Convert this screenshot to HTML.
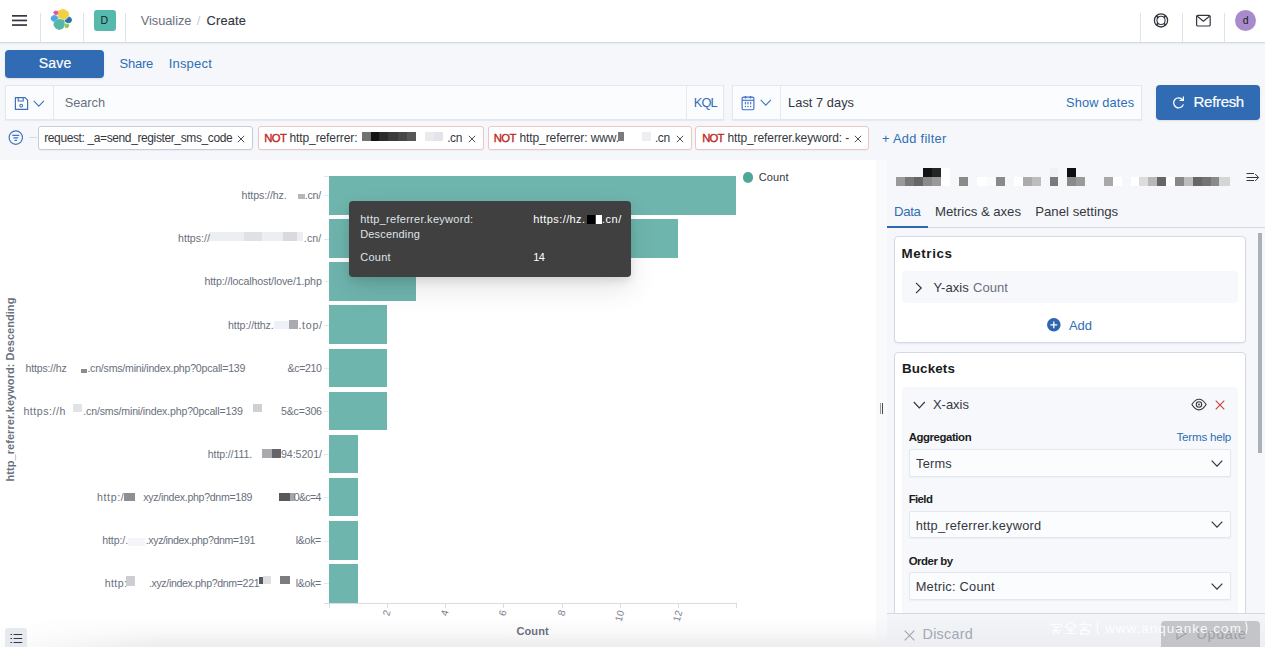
<!DOCTYPE html>
<html><head><meta charset="utf-8">
<style>
*{box-sizing:border-box;margin:0;padding:0}
html,body{width:1265px;height:647px;overflow:hidden;background:#fff;font-family:"Liberation Sans",sans-serif}
.b{position:absolute}
.tx{position:absolute;white-space:nowrap;line-height:1;font-family:"Liberation Sans",sans-serif}
</style></head><body>
<div class="b" style="left:0px;top:0px;width:1265px;height:42px;background:#fff"></div>
<div class="b" style="left:0px;top:42px;width:1265px;height:1px;background:#d3dae6"></div>
<div class="b" style="left:0px;top:43px;width:1265px;height:2px;background:linear-gradient(180deg,rgba(0,0,0,.05),rgba(0,0,0,0))"></div>
<div class="b" style="left:40px;top:13px;width:1px;height:29px;background:#dfe4ec"></div>
<div class="b" style="left:83px;top:13px;width:1px;height:29px;background:#dfe4ec"></div>
<div class="b" style="left:125px;top:13px;width:1px;height:29px;background:#dfe4ec"></div>
<div class="b" style="left:1140px;top:13px;width:1px;height:29px;background:#dfe4ec"></div>
<div class="b" style="left:1182px;top:13px;width:1px;height:29px;background:#dfe4ec"></div>
<div class="b" style="left:1224px;top:13px;width:1px;height:29px;background:#dfe4ec"></div>
<svg class="b" style="left:12px;top:14px" width="15" height="13" viewBox="0 0 15 13"><rect x="0" y="1" width="15" height="1.7" fill="#343741"/><rect x="0" y="5.6" width="15" height="1.7" fill="#343741"/><rect x="0" y="10.2" width="15" height="1.7" fill="#343741"/></svg>
<svg class="b" style="left:0;top:0" width="90" height="41" viewBox="0 0 90 41"><path d="M58.6 10.9 L63.5 9.2 L68.0 11.8 L68.8 14.8 L68.0 16.5 L63.8 19.7 L58.4 17.3 L58.0 13.6Z" fill="#f3cf45" stroke="#f3cf45" stroke-width="0.9" stroke-linejoin="round"/><path d="M54.0 11.8 L55.8 10.9 L57.8 11.5 L57.8 13.8 L57.0 14.6 L54.9 14.4 L53.8 13.0Z" fill="#e0589a" stroke="#e0589a" stroke-width="0.9" stroke-linejoin="round"/><path d="M51.5 16.8 L53.6 15.4 L56.6 15.9 L57.8 17.9 L56.0 20.0 L53.6 21.4 L51.8 20.3 L51.1 18.5Z" fill="#4da8e0" stroke="#4da8e0" stroke-width="0.9" stroke-linejoin="round"/><path d="M54.3 21.9 L58.6 19.1 L64.0 20.5 L64.3 25.2 L62.8 28.3 L59.5 29.5 L55.9 28.3 L54.0 25.3Z" fill="#57b6aa" stroke="#57b6aa" stroke-width="0.9" stroke-linejoin="round"/><path d="M65.1 20.4 L69.0 16.9 L70.8 17.9 L71.6 19.8 L70.8 22.1 L68.1 22.9 L65.4 21.6Z" fill="#2b75a6" stroke="#2b75a6" stroke-width="0.9" stroke-linejoin="round"/><path d="M65.1 23.9 L68.6 24.5 L68.9 26.0 L67.8 27.4 L65.4 27.7Z" fill="#8cc84f" stroke="#8cc84f" stroke-width="0.9" stroke-linejoin="round"/></svg>
<div class="b" style="left:94px;top:10px;width:22px;height:21px;background:#56b9ae;border-radius:3px"></div>
<div class="b" style="left:1235px;top:10px;width:21px;height:21px;background:#a98bcc;border-radius:50%"></div>
<svg class="b" style="left:1152px;top:12px" width="18" height="17" viewBox="0 0 18 17">
<circle cx="9" cy="8.4" r="6.6" fill="none" stroke="#343741" stroke-width="1.3"/>
<circle cx="9" cy="8.4" r="4.1" fill="none" stroke="#343741" stroke-width="1.1"/>
<path d="M4.3 3.7L6.1 5.5M13.7 3.7L11.9 5.5M4.3 13.1L6.1 11.3M13.7 13.1L11.9 11.3" stroke="#343741" stroke-width="1.8"/>
</svg>
<svg class="b" style="left:1195px;top:14px" width="17" height="13" viewBox="0 0 17 13">
<rect x="1.6" y="1.4" width="13.6" height="10.6" rx="1.3" fill="none" stroke="#343741" stroke-width="1.2"/>
<path d="M2 2L8.4 7.3L14.8 2" fill="none" stroke="#343741" stroke-width="1.2"/>
</svg>
<div class="b" style="left:0px;top:43px;width:1265px;height:117px;background:#f6f7fa"></div>
<div class="b" style="left:0px;top:43px;width:1265px;height:2px;background:linear-gradient(180deg,rgba(0,0,0,.05),rgba(0,0,0,0))"></div>
<div class="b" style="left:5px;top:50px;width:99px;height:28px;background:#306bb3;border-radius:4px;box-shadow:0 1px 2px rgba(0,0,0,.1)"></div>
<div class="b" style="left:5px;top:85px;width:719px;height:35px;background:#fbfcfd;border:1px solid #e3e7ee;box-shadow:0 1px 1px rgba(152,162,179,.15)"></div>
<div class="b" style="left:53px;top:86px;width:1px;height:33px;background:#e6e9ef"></div>
<div class="b" style="left:686px;top:86px;width:1px;height:33px;background:#e6e9ef"></div>
<svg class="b" style="left:14px;top:96px" width="15" height="15" viewBox="0 0 15 15">
<path d="M1.4 1.6h9.6l2.6 2.6v9.2H1.4z" fill="none" stroke="#3e6fc0" stroke-width="1.2" stroke-linejoin="round"/>
<path d="M4.2 1.6v3.4h5v-3.4" fill="none" stroke="#3e6fc0" stroke-width="1.1"/>
<circle cx="7.2" cy="9.6" r="1.4" fill="none" stroke="#3e6fc0" stroke-width="1.1"/>
</svg>
<svg class="b" style="left:33px;top:100px" width="12" height="8" viewBox="0 0 12 8"><path d="M0.7 0.9L5.8 6.1L10.9 0.9" fill="none" stroke="#3e78c4" stroke-width="1.15"/></svg>
<div class="b" style="left:732px;top:85px;width:410px;height:35px;background:#fbfcfd;border:1px solid #e3e7ee;box-shadow:0 1px 1px rgba(152,162,179,.15)"></div>
<div class="b" style="left:780px;top:86px;width:1px;height:33px;background:#e6e9ef"></div>
<svg class="b" style="left:741px;top:95px" width="14" height="16" viewBox="0 0 14 16">
<rect x="1.1" y="2.1" width="11.8" height="12.6" rx="1.5" fill="none" stroke="#3e6fc0" stroke-width="1.15"/>
<path d="M1.1 5.3h11.8" stroke="#3e6fc0" stroke-width="1.1"/>
<path d="M4.5 1v2.6M9.5 1v2.6" stroke="#3e6fc0" stroke-width="1.3"/>
<g fill="#5f86c9"><rect x="3.8" y="6.8" width="1.3" height="2.6"/><rect x="6.3" y="6.8" width="1.3" height="2.6"/><rect x="9" y="6.8" width="1.3" height="2.6"/></g>
<g fill="#3e6fc0"><rect x="3.8" y="10.9" width="1.3" height="1.2"/><rect x="6.3" y="10.9" width="1.3" height="1.2"/><rect x="9" y="10.9" width="1.3" height="1.2"/></g>
</svg>
<svg class="b" style="left:760px;top:99px" width="12" height="8" viewBox="0 0 12 8"><path d="M0.7 0.9L5.8 6.1L10.9 0.9" fill="none" stroke="#3e78c4" stroke-width="1.15"/></svg>
<div class="b" style="left:1156px;top:85px;width:104px;height:35px;background:#306bb3;border-radius:4px;box-shadow:0 1px 2px rgba(0,0,0,.1)"></div>
<svg class="b" style="left:1171px;top:95px" width="15" height="15" viewBox="0 0 15 15">
<path d="M11.9 5.2A5 5 0 1 0 12.4 9.4" fill="none" stroke="#fff" stroke-width="1.25"/>
<path d="M12.4 1.6v3.8H8.6" fill="none" stroke="#fff" stroke-width="1.25"/>
</svg>
<svg class="b" style="left:8px;top:130px" width="16" height="16" viewBox="0 0 16 16">
<circle cx="7.8" cy="7.6" r="6.7" fill="none" stroke="#3e72c2" stroke-width="1.2"/>
<path d="M4.3 5.4h7M5.4 7.9h4.8M6.6 10.4h2.4" stroke="#3e72c2" stroke-width="1.2"/>
</svg>
<div class="b" style="left:29px;top:137px;width:8px;height:1px;background:#d3dae6"></div>
<div class="b" style="left:37.6px;top:126px;width:215px;height:24px;background:#fff;border:1px solid #c6ccd6;border-radius:3px;box-shadow:0 1px 1px rgba(0,0,0,.04)"></div>
<div class="b" style="left:257.5px;top:126px;width:226px;height:24px;background:#fff;border:1px solid #e9c8c4;border-radius:3px;box-shadow:0 1px 1px rgba(0,0,0,.04)"></div>
<div class="b" style="left:487.5px;top:126px;width:204px;height:24px;background:#fff;border:1px solid #e9c8c4;border-radius:3px;box-shadow:0 1px 1px rgba(0,0,0,.04)"></div>
<div class="b" style="left:695.3px;top:126px;width:174px;height:24px;background:#fff;border:1px solid #e9c8c4;border-radius:3px;box-shadow:0 1px 1px rgba(0,0,0,.04)"></div>
<svg class="b" style="left:237px;top:134.5px" width="8" height="8" viewBox="0 0 8 8"><path d="M0.8 0.8L7.2 7.2M7.2 0.8L0.8 7.2" stroke="#4a4f5a" stroke-width="1"/></svg>
<svg class="b" style="left:467.5px;top:134.5px" width="8" height="8" viewBox="0 0 8 8"><path d="M0.8 0.8L7.2 7.2M7.2 0.8L0.8 7.2" stroke="#4a4f5a" stroke-width="1"/></svg>
<svg class="b" style="left:676px;top:134.5px" width="8" height="8" viewBox="0 0 8 8"><path d="M0.8 0.8L7.2 7.2M7.2 0.8L0.8 7.2" stroke="#4a4f5a" stroke-width="1"/></svg>
<svg class="b" style="left:853.5px;top:134.5px" width="8" height="8" viewBox="0 0 8 8"><path d="M0.8 0.8L7.2 7.2M7.2 0.8L0.8 7.2" stroke="#4a4f5a" stroke-width="1"/></svg>
<div class="b" style="left:361.66px;top:132px;width:8.89px;height:9px;background:#727272"></div>
<div class="b" style="left:370.55px;top:132px;width:8.89px;height:9px;background:#141414"></div>
<div class="b" style="left:379.45px;top:132px;width:8.89px;height:9px;background:#2c2c2c"></div>
<div class="b" style="left:388.34px;top:132px;width:9.88px;height:9px;background:#3b3b3b"></div>
<div class="b" style="left:398.22px;top:132px;width:8.89px;height:9px;background:#474747"></div>
<div class="b" style="left:407.11px;top:132px;width:8.89px;height:9px;background:#575757"></div>
<div class="b" style="left:424.90px;top:132px;width:8.89px;height:9px;background:#e8eaee"></div>
<div class="b" style="left:433.79px;top:132px;width:8.89px;height:9px;background:#e2e4ea"></div>
<div class="b" style="left:618.34px;top:131.5px;width:5.53px;height:9.5px;background:#7a7a7a"></div>
<div class="b" style="left:642.06px;top:131.5px;width:8.89px;height:9.5px;background:#eceef2"></div>
<div class="b" style="left:0px;top:160px;width:876px;height:487px;background:#fff"></div>
<div class="b" style="left:876px;top:160px;width:10.5px;height:487px;background:#f9fafc"></div>
<div class="b" style="left:879.5px;top:403px;width:1px;height:10.5px;background:#9a9a9e"></div>
<div class="b" style="left:882px;top:403px;width:1px;height:10.5px;background:#46484d"></div>
<div class="b" style="left:324px;top:175.5px;width:5px;height:1px;background:#e4e7ec"></div>
<div class="b" style="left:324px;top:195.2px;width:4.5px;height:1px;background:#e4e7ec"></div>
<div class="b" style="left:324px;top:238.6px;width:4.5px;height:1px;background:#e4e7ec"></div>
<div class="b" style="left:324px;top:281.0px;width:4.5px;height:1px;background:#e4e7ec"></div>
<div class="b" style="left:324px;top:324.7px;width:4.5px;height:1px;background:#e4e7ec"></div>
<div class="b" style="left:324px;top:367.7px;width:4.5px;height:1px;background:#e4e7ec"></div>
<div class="b" style="left:324px;top:410.8px;width:4.5px;height:1px;background:#e4e7ec"></div>
<div class="b" style="left:324px;top:453.8px;width:4.5px;height:1px;background:#e4e7ec"></div>
<div class="b" style="left:324px;top:497.1px;width:4.5px;height:1px;background:#e4e7ec"></div>
<div class="b" style="left:324px;top:540.5px;width:4.5px;height:1px;background:#e4e7ec"></div>
<div class="b" style="left:324px;top:583.0px;width:4.5px;height:1px;background:#e4e7ec"></div>
<div class="b" style="left:329px;top:176.20px;width:406.80px;height:38.6px;background:#6eb5ae"></div>
<div class="b" style="left:329px;top:219.29px;width:348.69px;height:38.6px;background:#6eb5ae"></div>
<div class="b" style="left:329px;top:262.38px;width:87.17px;height:38.6px;background:#6eb5ae"></div>
<div class="b" style="left:329px;top:305.47px;width:58.11px;height:38.6px;background:#6eb5ae"></div>
<div class="b" style="left:329px;top:348.56px;width:58.11px;height:38.6px;background:#6eb5ae"></div>
<div class="b" style="left:329px;top:391.65px;width:58.11px;height:38.6px;background:#6eb5ae"></div>
<div class="b" style="left:329px;top:434.74px;width:29.06px;height:38.6px;background:#6eb5ae"></div>
<div class="b" style="left:329px;top:477.83px;width:29.06px;height:38.6px;background:#6eb5ae"></div>
<div class="b" style="left:329px;top:520.92px;width:29.06px;height:38.6px;background:#6eb5ae"></div>
<div class="b" style="left:329px;top:564.01px;width:29.06px;height:38.6px;background:#6eb5ae"></div>
<div class="b" style="left:297.5px;top:193.5px;width:7.5px;height:5.5px;background:#b5b7bc"></div>
<div class="b" style="left:209.0px;top:232.0px;width:94.0px;height:9.0px;background:#eceef2"></div>
<div class="b" style="left:244.0px;top:232.0px;width:18.0px;height:9.0px;background:#dfe1e7"></div>
<div class="b" style="left:283.0px;top:232.0px;width:14.0px;height:9.0px;background:#d8dae0"></div>
<div class="b" style="left:274.0px;top:321.0px;width:15.0px;height:8.0px;background:#eef1f7"></div>
<div class="b" style="left:289.0px;top:320.0px;width:9.0px;height:9.0px;background:#a9abb0"></div>
<div class="b" style="left:80.6px;top:368.5px;width:6.8px;height:4.5px;background:#8a8c90"></div>
<div class="b" style="left:72.6px;top:403.5px;width:9.4px;height:8.1px;background:#e2e3e8"></div>
<div class="b" style="left:252.7px;top:404.0px;width:9.4px;height:7.6px;background:#cfd0d4"></div>
<div class="b" style="left:262.0px;top:449.0px;width:9.5px;height:9.0px;background:#a9aaae"></div>
<div class="b" style="left:271.5px;top:449.0px;width:9.5px;height:9.0px;background:#646569"></div>
<div class="b" style="left:124.2px;top:493.0px;width:11.3px;height:8.0px;background:#8e8f93"></div>
<div class="b" style="left:279.4px;top:493.0px;width:10.3px;height:8.0px;background:#56585c"></div>
<div class="b" style="left:289.7px;top:493.0px;width:5.1px;height:8.0px;background:#a5a6aa"></div>
<div class="b" style="left:128.0px;top:538.0px;width:17.0px;height:8.0px;background:#f3f5f8"></div>
<div class="b" style="left:126.2px;top:576.0px;width:9.3px;height:10.0px;background:#cdced2"></div>
<div class="b" style="left:258.8px;top:577.0px;width:4.0px;height:7.0px;background:#58595d"></div>
<div class="b" style="left:262.8px;top:576.0px;width:8.2px;height:8.0px;background:#dedfe3"></div>
<div class="b" style="left:280.4px;top:576.0px;width:9.3px;height:8.0px;background:#7b7c80"></div>
<div class="b" style="left:323.5px;top:603px;width:412.5px;height:1px;background:#d9dce2"></div>
<div class="b" style="left:329.0px;top:603px;width:1px;height:5px;background:#d9dce2"></div>
<div class="b" style="left:387.1px;top:603px;width:1px;height:5px;background:#d9dce2"></div>
<div class="b" style="left:445.2px;top:603px;width:1px;height:5px;background:#d9dce2"></div>
<div class="b" style="left:503.3px;top:603px;width:1px;height:5px;background:#d9dce2"></div>
<div class="b" style="left:561.5px;top:603px;width:1px;height:5px;background:#d9dce2"></div>
<div class="b" style="left:619.6px;top:603px;width:1px;height:5px;background:#d9dce2"></div>
<div class="b" style="left:677.7px;top:603px;width:1px;height:5px;background:#d9dce2"></div>
<div class="b" style="left:735.8px;top:603px;width:1px;height:5px;background:#d9dce2"></div>
<div class="xt" style="position:absolute;left:377.1px;top:608.0px;width:20px;text-align:center;font-size:10px;color:#7d838e;transform:rotate(-75deg);transform-origin:50% 50%;line-height:10px;white-space:nowrap">2</div>
<div class="xt" style="position:absolute;left:435.2px;top:608.0px;width:20px;text-align:center;font-size:10px;color:#7d838e;transform:rotate(-75deg);transform-origin:50% 50%;line-height:10px;white-space:nowrap">4</div>
<div class="xt" style="position:absolute;left:493.3px;top:608.0px;width:20px;text-align:center;font-size:10px;color:#7d838e;transform:rotate(-75deg);transform-origin:50% 50%;line-height:10px;white-space:nowrap">6</div>
<div class="xt" style="position:absolute;left:551.5px;top:608.0px;width:20px;text-align:center;font-size:10px;color:#7d838e;transform:rotate(-75deg);transform-origin:50% 50%;line-height:10px;white-space:nowrap">8</div>
<div class="xt" style="position:absolute;left:609.6px;top:610.8px;width:20px;text-align:center;font-size:10px;color:#7d838e;transform:rotate(-75deg);transform-origin:50% 50%;line-height:10px;white-space:nowrap">10</div>
<div class="xt" style="position:absolute;left:667.7px;top:610.8px;width:20px;text-align:center;font-size:10px;color:#7d838e;transform:rotate(-75deg);transform-origin:50% 50%;line-height:10px;white-space:nowrap">12</div>
<div class="b" style="left:742.7px;top:172.2px;width:10.6px;height:10.6px;border-radius:50%;background:#4fa797"></div>
<div class="b" style="left:349px;top:200.7px;width:282.2px;height:75.9px;background:#404040;border-radius:4px;box-shadow:0 12px 28px rgba(0,0,0,.10),0 4px 8px rgba(0,0,0,.10)"></div>
<div class="b" style="left:586.6px;top:214.5px;width:8.4px;height:9px;background:#000"></div>
<div class="b" style="left:596px;top:214.5px;width:6px;height:9px;background:#fff"></div>
<div class="b" style="left:0px;top:618px;width:886.5px;height:29px;background:linear-gradient(180deg,rgba(238,238,241,0) 0%,rgba(238,238,241,.4) 50%,rgba(236,236,239,1) 100%);-webkit-mask-image:linear-gradient(90deg,rgba(0,0,0,.15) 0px,#000 160px)"></div>
<div class="b" style="left:5px;top:628px;width:22px;height:21px;background:#e6e9ef;border-radius:3px"></div>
<svg class="b" style="left:10px;top:633px" width="13" height="11" viewBox="0 0 13 11"><path d="M0.5 1.5h1.6M0.5 5.5h1.6M0.5 9.5h1.6M3.6 1.5h8.6M3.6 5.5h8.6M3.6 9.5h8.6" stroke="#343741" stroke-width="1.2"/></svg>
<div class="b" style="left:886.5px;top:160px;width:378.5px;height:487px;background:#f5f7fa"></div>
<div class="b" style="left:923.02px;top:168.3px;width:8.89px;height:8.9px;background:#121212"></div>
<div class="b" style="left:931.91px;top:168.3px;width:8.89px;height:8.9px;background:#252525"></div>
<div class="b" style="left:940.81px;top:168.3px;width:8.89px;height:8.9px;background:#ffffff"></div>
<div class="b" style="left:1049.61px;top:168.3px;width:8.89px;height:8.9px;background:#eff1f6"></div>
<div class="b" style="left:1067.40px;top:168.3px;width:8.89px;height:8.9px;background:#0e0e0e"></div>
<div class="b" style="left:896.34px;top:177.2px;width:8.89px;height:8.9px;background:#9a9a9a"></div>
<div class="b" style="left:905.23px;top:177.2px;width:8.89px;height:8.9px;background:#787878"></div>
<div class="b" style="left:914.12px;top:177.2px;width:8.89px;height:8.9px;background:#666"></div>
<div class="b" style="left:923.02px;top:177.2px;width:8.89px;height:8.9px;background:#8a8a8a"></div>
<div class="b" style="left:931.91px;top:177.2px;width:8.89px;height:8.9px;background:#999"></div>
<div class="b" style="left:940.81px;top:177.2px;width:8.89px;height:8.9px;background:#fff"></div>
<div class="b" style="left:959.19px;top:177.2px;width:8.89px;height:8.9px;background:#8a8a8a"></div>
<div class="b" style="left:976.98px;top:177.2px;width:8.89px;height:8.9px;background:#fff"></div>
<div class="b" style="left:985.87px;top:177.2px;width:8.89px;height:8.9px;background:#fbfbfd"></div>
<div class="b" style="left:996.25px;top:177.2px;width:8.89px;height:8.9px;background:#8a8a8a"></div>
<div class="b" style="left:1014.04px;top:177.2px;width:8.89px;height:8.9px;background:#fff"></div>
<div class="b" style="left:1022.93px;top:177.2px;width:8.89px;height:8.9px;background:#ababab"></div>
<div class="b" style="left:1031.82px;top:177.2px;width:8.89px;height:8.9px;background:#bdbdbd"></div>
<div class="b" style="left:1049.61px;top:177.2px;width:8.89px;height:8.9px;background:#7a7a7a"></div>
<div class="b" style="left:1067.40px;top:177.2px;width:8.89px;height:8.9px;background:#8a8a8a"></div>
<div class="b" style="left:1076.29px;top:177.2px;width:8.89px;height:8.9px;background:#9a9a9a"></div>
<div class="b" style="left:1103.87px;top:177.2px;width:8.89px;height:8.9px;background:#a8a8a8"></div>
<div class="b" style="left:1112.76px;top:177.2px;width:8.89px;height:8.9px;background:#fff"></div>
<div class="b" style="left:1130.55px;top:177.2px;width:8.89px;height:8.9px;background:#fff"></div>
<div class="b" style="left:1139.44px;top:177.2px;width:8.89px;height:8.9px;background:#dcdcdc"></div>
<div class="b" style="left:1148.34px;top:177.2px;width:8.89px;height:8.9px;background:#b8b8b8"></div>
<div class="b" style="left:1157.23px;top:177.2px;width:8.89px;height:8.9px;background:#666"></div>
<div class="b" style="left:1166.13px;top:177.2px;width:8.89px;height:8.9px;background:#fff"></div>
<div class="b" style="left:1175.02px;top:177.2px;width:8.89px;height:8.9px;background:#888"></div>
<div class="b" style="left:1183.91px;top:177.2px;width:8.89px;height:8.9px;background:#bcbcbc"></div>
<div class="b" style="left:1192.81px;top:177.2px;width:8.89px;height:8.9px;background:#666"></div>
<div class="b" style="left:1201.70px;top:177.2px;width:8.89px;height:8.9px;background:#737373"></div>
<div class="b" style="left:1210.60px;top:177.2px;width:8.89px;height:8.9px;background:#8a8a8a"></div>
<div class="b" style="left:1219.49px;top:177.2px;width:10.97px;height:8.9px;background:#d5d5d5"></div>
<svg class="b" style="left:1245px;top:171px" width="15" height="12" viewBox="0 0 15 12">
<path d="M1.5 2.5h7.5M1.5 6.5h12M1.5 9.5h7.5M10.2 3L13.6 6.5L10.2 10" fill="none" stroke="#343741" stroke-width="1"/>
</svg>
<div class="b" style="left:887px;top:226.5px;width:378px;height:1px;background:#d3dae6"></div>
<div class="b" style="left:886.6px;top:225.5px;width:41.3px;height:2px;background:#2d67b1"></div>
<div class="b" style="left:1258px;top:233px;width:4px;height:219.5px;background:#abafb7"></div>
<div class="b" style="left:894.2px;top:235.6px;width:351.5px;height:107.5px;background:#fff;border:1px solid #d3dae6;border-radius:4px;box-shadow:0 1px 2px rgba(0,0,0,.06)"></div>
<div class="b" style="left:901.6px;top:271.2px;width:336px;height:32.2px;background:#f7f8fb;border-radius:4px"></div>
<svg class="b" style="left:914px;top:282px" width="9" height="12" viewBox="0 0 9 12"><path d="M2 0.8L7.2 6L2 11.2" fill="none" stroke="#343741" stroke-width="1.2"/></svg>
<svg class="b" style="left:1046.9px;top:317.7px" width="14" height="14" viewBox="0 0 14 14"><circle cx="6.8" cy="6.8" r="6.8" fill="#2d67b1"/><path d="M6.8 3.4v6.8M3.4 6.8h6.8" stroke="#fff" stroke-width="1.3"/></svg>
<div class="b" style="left:894.2px;top:351.7px;width:351.5px;height:300px;background:#fff;border:1px solid #d3dae6;border-radius:4px;box-shadow:0 1px 2px rgba(0,0,0,.06)"></div>
<div class="b" style="left:901.6px;top:387px;width:336px;height:300px;background:#f7f8fb;border-radius:4px"></div>
<svg class="b" style="left:913px;top:401px" width="13" height="8" viewBox="0 0 13 8"><path d="M0.8 1L6.3 6.8L11.8 1" fill="none" stroke="#343741" stroke-width="1.2"/></svg>
<svg class="b" style="left:1191px;top:398px" width="16" height="13" viewBox="0 0 16 13">
<path d="M0.9 6.5C3 3 5.4 1.2 8 1.2S13 3 15.1 6.5C13 10 10.6 11.8 8 11.8S3 10 0.9 6.5z" fill="none" stroke="#343741" stroke-width="1.15"/>
<circle cx="8" cy="6.5" r="2.7" fill="none" stroke="#343741" stroke-width="1.1"/>
<circle cx="8" cy="6.5" r="0.9" fill="#343741"/>
</svg>
<svg class="b" style="left:1215px;top:399.5px" width="10" height="10" viewBox="0 0 10 10"><path d="M0.7 0.7L9.3 9.3M9.3 0.7L0.7 9.3" stroke="#c7463f" stroke-width="1.15"/></svg>
<div class="b" style="left:908.7px;top:449px;width:322px;height:28px;background:#fbfcfd;border:1px solid #e3e7ee;border-radius:2px;box-shadow:0 1px 1px rgba(152,162,179,.1)"></div>
<svg class="b" style="left:1210.5px;top:459.5px" width="12" height="7" viewBox="0 0 12 7"><path d="M0.7 0.7L6 6.2L11.3 0.7" fill="none" stroke="#343741" stroke-width="1.2"/></svg>
<div class="b" style="left:908.7px;top:511px;width:322px;height:27px;background:#fbfcfd;border:1px solid #e3e7ee;border-radius:2px;box-shadow:0 1px 1px rgba(152,162,179,.1)"></div>
<svg class="b" style="left:1210.5px;top:521.0px" width="12" height="7" viewBox="0 0 12 7"><path d="M0.7 0.7L6 6.2L11.3 0.7" fill="none" stroke="#343741" stroke-width="1.2"/></svg>
<div class="b" style="left:908.7px;top:572px;width:322px;height:28px;background:#fbfcfd;border:1px solid #e3e7ee;border-radius:2px;box-shadow:0 1px 1px rgba(152,162,179,.1)"></div>
<svg class="b" style="left:1210.5px;top:582.5px" width="12" height="7" viewBox="0 0 12 7"><path d="M0.7 0.7L6 6.2L11.3 0.7" fill="none" stroke="#343741" stroke-width="1.2"/></svg>
<div class="b" style="left:886.7px;top:613px;width:378.3px;height:34px;background:linear-gradient(180deg,#f3f5f8 0%,#eceef2 100%)"></div>
<div class="b" style="left:886.7px;top:613px;width:378.3px;height:1px;background:#d3dae6"></div>
<svg class="b" style="left:903.5px;top:629.5px" width="11" height="11" viewBox="0 0 11 11"><path d="M0.7 0.7L10.3 10.3M10.3 0.7L0.7 10.3" stroke="#a2a7b0" stroke-width="1.2"/></svg>
<div class="b" style="left:1160.6px;top:620.7px;width:99.2px;height:30px;background:#c3c5c9;border-radius:4px"></div>
<svg class="b" style="left:1176px;top:627px" width="11" height="13" viewBox="0 0 11 13"><path d="M1 1L10 6.5L1 12z" fill="none" stroke="#9c9fa5" stroke-width="1.2"/></svg>
<svg class="b" style="left:1093px;top:619px" width="160" height="18" viewBox="0 0 160 18"><path d="M5.5 2.5Q2.5 9 5.5 15.5M152.5 2.5Q155.5 9 152.5 15.5" fill="none" stroke="#fff" stroke-width="1.1" opacity=".9"/></svg>
<div class="b" style="left:1049px;top:621px;width:44px;height:14px"><svg width="44" height="14" viewBox="0 0 44 14"><g fill="none" stroke="#fff" stroke-width="1.1" opacity=".9"><path d="M7 1v2M1.5 3.5h11v2M4 6h7M3 9.5h9M8 6l-4 7M5 9l6 4"/><path d="M21.5 1l-6 5M21.5 1l6 5M17 7h9M18 9.5h7M16.5 12.5h10M21.5 7v5.5"/><path d="M36 1v2M30.5 3.5h11v2M33 6l5 2.5M38 6l-5 3M31.5 9.5h9v3.5h-9z"/></g></svg></div>
<div id="t0" class="tx" style="left:140.80px;top:15.05px;font-size:12.8px;color:#69707d;letter-spacing:-0.048px;">Visualize</div>
<div id="t1" class="tx" style="left:196.80px;top:15.05px;font-size:12.8px;color:#c5cbd6;letter-spacing:1.331px;">/</div>
<div id="t2" class="tx" style="left:206.60px;top:15.05px;font-size:12.8px;color:#343741;letter-spacing:0.176px;-webkit-text-stroke:0.15px #343741;">Create</div>
<div id="t3" class="tx" style="left:100.50px;top:15.37px;font-size:10.5px;color:#1a1c21;letter-spacing:1.208px;">D</div>
<div id="t4" class="tx" style="left:1242.80px;top:15.47px;font-size:10.5px;color:#1a1c21;letter-spacing:0.353px;">d</div>
<div id="t5" class="tx" style="left:38.70px;top:56.41px;font-size:14px;color:#fff;letter-spacing:0.196px;-webkit-text-stroke:0.2px #fff;">Save</div>
<div id="t6" class="tx" style="left:119.50px;top:57.25px;font-size:13px;color:#2f6eb5;letter-spacing:-0.248px;">Share</div>
<div id="t7" class="tx" style="left:168.70px;top:57.25px;font-size:13px;color:#2f6eb5;letter-spacing:0.196px;">Inspect</div>
<div id="t8" class="tx" style="left:64.70px;top:97.20px;font-size:12.8px;color:#69707d;letter-spacing:-0.032px;">Search</div>
<div id="t9" class="tx" style="left:693.80px;top:97.45px;font-size:12.8px;color:#2f6eb5;letter-spacing:-0.909px;">KQL</div>
<div id="t10" class="tx" style="left:788.10px;top:97.25px;font-size:12.8px;color:#343741;letter-spacing:0.045px;">Last 7 days</div>
<div id="t11" class="tx" style="left:1066.10px;top:96.75px;font-size:12.8px;color:#2f6eb5;letter-spacing:0.125px;">Show dates</div>
<div id="t12" class="tx" style="left:1193.60px;top:94.47px;font-size:15px;color:#fff;letter-spacing:-0.321px;-webkit-text-stroke:0.2px #fff;">Refresh</div>
<div id="t13" class="tx" style="left:44.20px;top:131.94px;font-size:12px;color:#343741;letter-spacing:-0.383px;">request: _a=send_register_sms_code</div>
<div id="t14" class="tx" style="left:264.20px;top:132.88px;font-size:11.3px;color:#bd271e;letter-spacing:-0.530px;-webkit-text-stroke:0.35px #bd271e;">NOT</div>
<div id="t15" class="tx" style="left:289.50px;top:131.94px;font-size:12px;color:#343741;letter-spacing:-0.106px;">http_referrer:</div>
<div id="t16" class="tx" style="left:447.20px;top:131.94px;font-size:12px;color:#343741;letter-spacing:-0.404px;">.cn</div>
<div id="t17" class="tx" style="left:493.80px;top:132.88px;font-size:11.3px;color:#bd271e;letter-spacing:-0.624px;-webkit-text-stroke:0.35px #bd271e;">NOT</div>
<div id="t18" class="tx" style="left:519.50px;top:131.94px;font-size:12px;color:#343741;letter-spacing:-0.099px;">http_referrer: www.</div>
<div id="t19" class="tx" style="left:654.90px;top:131.94px;font-size:12px;color:#343741;letter-spacing:-0.404px;">.cn</div>
<div id="t20" class="tx" style="left:702.20px;top:132.88px;font-size:11.3px;color:#bd271e;letter-spacing:-0.780px;-webkit-text-stroke:0.35px #bd271e;">NOT</div>
<div id="t21" class="tx" style="left:727.40px;top:131.94px;font-size:12px;color:#343741;letter-spacing:-0.098px;">http_referrer.keyword: -</div>
<div id="t22" class="tx" style="left:882.10px;top:132.55px;font-size:12.8px;color:#2f6eb5;letter-spacing:0.307px;">+ Add filter</div>
<div id="t23" class="tx" style="left:-139.70px;top:383.70px;width:300px;text-align:center;font-size:11px;color:#69707d;font-weight:bold;letter-spacing:0.051px;transform:rotate(-90deg)"><span>http_referrer.keyword: Descending</span></div>
<div id="t24" class="tx" style="left:241.60px;top:190.02px;font-size:10.6px;color:#69707d;letter-spacing:-0.074px;">https://hz.</div>
<div id="t25" class="tx" style="left:304.70px;top:190.02px;font-size:10.6px;color:#69707d;letter-spacing:-0.163px;">.cn/</div>
<div id="t26" class="tx" style="left:178.00px;top:233.42px;font-size:10.6px;color:#69707d;letter-spacing:0.029px;">https://</div>
<div id="t27" class="tx" style="left:303.80px;top:233.42px;font-size:10.6px;color:#69707d;letter-spacing:0.141px;">.cn/</div>
<div id="t28" class="tx" style="left:204.50px;top:275.82px;font-size:10.6px;color:#69707d;letter-spacing:-0.110px;">http://localhost/love/1.php</div>
<div id="t29" class="tx" style="left:228.00px;top:319.52px;font-size:10.6px;color:#69707d;letter-spacing:-0.066px;">http://tthz.</div>
<div id="t30" class="tx" style="left:298.40px;top:319.52px;font-size:10.6px;color:#69707d;letter-spacing:0.744px;">.top/</div>
<div id="t31" class="tx" style="left:25.50px;top:362.52px;font-size:10.6px;color:#69707d;letter-spacing:-0.189px;">https://hz</div>
<div id="t32" class="tx" style="left:87.40px;top:362.52px;font-size:10.6px;color:#69707d;letter-spacing:-0.225px;">.cn/sms/mini/index.php?0pcall=139</div>
<div id="t33" class="tx" style="left:287.50px;top:362.52px;font-size:10.6px;color:#69707d;letter-spacing:-0.346px;">&amp;c=210</div>
<div id="t34" class="tx" style="left:23.40px;top:405.62px;font-size:10.6px;color:#69707d;letter-spacing:0.525px;">https://h</div>
<div id="t35" class="tx" style="left:83.30px;top:405.62px;font-size:10.6px;color:#69707d;letter-spacing:-0.178px;">.cn/sms/mini/index.php?0pcall=139</div>
<div id="t36" class="tx" style="left:281.00px;top:405.62px;font-size:10.6px;color:#69707d;letter-spacing:-0.188px;">5&amp;c=306</div>
<div id="t37" class="tx" style="left:207.80px;top:448.62px;font-size:10.6px;color:#69707d;letter-spacing:-0.125px;">http://111.</div>
<div id="t38" class="tx" style="left:281.00px;top:448.62px;font-size:10.6px;color:#69707d;letter-spacing:-0.034px;">94:5201/</div>
<div id="t39" class="tx" style="left:96.90px;top:491.92px;font-size:10.6px;color:#69707d;letter-spacing:0.667px;">http:/</div>
<div id="t40" class="tx" style="left:143.30px;top:491.92px;font-size:10.6px;color:#69707d;letter-spacing:-0.302px;">xyz/index.php?dnm=189</div>
<div id="t41" class="tx" style="left:293.80px;top:491.92px;font-size:10.6px;color:#69707d;letter-spacing:-0.710px;">0&amp;c=4</div>
<div id="t42" class="tx" style="left:102.20px;top:535.32px;font-size:10.6px;color:#69707d;letter-spacing:-0.102px;">http:/.</div>
<div id="t43" class="tx" style="left:145.80px;top:535.32px;font-size:10.6px;color:#69707d;letter-spacing:-0.400px;">.xyz/index.php?dnm=191</div>
<div id="t44" class="tx" style="left:295.80px;top:535.32px;font-size:10.6px;color:#69707d;letter-spacing:-0.327px;">l&amp;ok=</div>
<div id="t45" class="tx" style="left:104.70px;top:577.82px;font-size:10.6px;color:#69707d;letter-spacing:0.419px;">http:</div>
<div id="t46" class="tx" style="left:148.90px;top:577.82px;font-size:10.6px;color:#69707d;letter-spacing:-0.352px;">.xyz/index.php?dnm=221</div>
<div id="t47" class="tx" style="left:295.80px;top:577.82px;font-size:10.6px;color:#69707d;letter-spacing:-0.327px;">l&amp;ok=</div>
<div id="t48" class="tx" style="left:516.50px;top:625.63px;font-size:11px;color:#69707d;font-weight:bold;letter-spacing:0.081px;">Count</div>
<div id="t49" class="tx" style="left:758.70px;top:171.73px;font-size:11px;color:#343741;letter-spacing:0.133px;">Count</div>
<div id="t50" class="tx" style="left:360.20px;top:213.63px;font-size:11px;color:#dfe3ea;letter-spacing:0.281px;">http_referrer.keyword:</div>
<div id="t51" class="tx" style="left:360.20px;top:229.13px;font-size:11px;color:#dfe3ea;letter-spacing:0.167px;">Descending</div>
<div id="t52" class="tx" style="left:360.20px;top:252.43px;font-size:11px;color:#dfe3ea;letter-spacing:0.258px;">Count</div>
<div id="t53" class="tx" style="left:533.30px;top:213.63px;font-size:11px;color:#ffffff;letter-spacing:0.410px;">https://hz.</div>
<div id="t54" class="tx" style="left:602.00px;top:213.63px;font-size:11px;color:#ffffff;letter-spacing:0.522px;">.cn/</div>
<div id="t55" class="tx" style="left:533.30px;top:252.43px;font-size:11px;color:#ffffff;letter-spacing:-0.750px;">14</div>
<div id="t56" class="tx" style="left:894.00px;top:204.75px;font-size:13.2px;color:#2f6eb5;letter-spacing:-0.323px;">Data</div>
<div id="t57" class="tx" style="left:935.10px;top:204.75px;font-size:13.2px;color:#343741;letter-spacing:-0.044px;">Metrics &amp; axes</div>
<div id="t58" class="tx" style="left:1035.20px;top:204.75px;font-size:13.2px;color:#343741;letter-spacing:0.012px;">Panel settings</div>
<div id="t59" class="tx" style="left:901.60px;top:246.55px;font-size:13.4px;color:#1a1c21;font-weight:bold;letter-spacing:0.567px;">Metrics</div>
<div id="t60" class="tx" style="left:933.50px;top:280.65px;font-size:13px;color:#343741;letter-spacing:0.075px;">Y-axis</div>
<div id="t61" class="tx" style="left:973.00px;top:280.65px;font-size:13px;color:#69707d;letter-spacing:0.027px;">Count</div>
<div id="t62" class="tx" style="left:1069.00px;top:318.65px;font-size:13px;color:#2f6eb5;letter-spacing:-0.072px;">Add</div>
<div id="t63" class="tx" style="left:902.00px;top:362.15px;font-size:13.4px;color:#1a1c21;font-weight:bold;letter-spacing:0.133px;">Buckets</div>
<div id="t64" class="tx" style="left:932.90px;top:398.40px;font-size:13px;color:#343741;letter-spacing:-0.005px;">X-axis</div>
<div id="t65" class="tx" style="left:908.70px;top:431.53px;font-size:11.4px;color:#1a1c21;font-weight:bold;letter-spacing:-0.418px;">Aggregation</div>
<div id="t66" class="tx" style="left:1176.50px;top:431.23px;font-size:11.6px;color:#2f6eb5;letter-spacing:-0.213px;">Terms help</div>
<div id="t67" class="tx" style="left:916.10px;top:458.35px;font-size:12.8px;color:#343741;letter-spacing:0.190px;">Terms</div>
<div id="t68" class="tx" style="left:908.70px;top:494.13px;font-size:11.4px;color:#1a1c21;font-weight:bold;letter-spacing:-0.597px;">Field</div>
<div id="t69" class="tx" style="left:915.70px;top:519.55px;font-size:12.8px;color:#343741;letter-spacing:0.224px;">http_referrer.keyword</div>
<div id="t70" class="tx" style="left:908.70px;top:555.73px;font-size:11.4px;color:#1a1c21;font-weight:bold;letter-spacing:-0.455px;">Order by</div>
<div id="t71" class="tx" style="left:915.70px;top:580.95px;font-size:12.8px;color:#343741;letter-spacing:0.241px;">Metric: Count</div>
<div id="t72" class="tx" style="left:922.60px;top:627.17px;font-size:14.4px;color:#a3a8b2;letter-spacing:0.220px;">Discard</div>
<div id="t73" class="tx" style="left:1196.50px;top:627.47px;font-size:14.4px;color:#9c9fa5;letter-spacing:0.619px;">Update</div>
<div id="t74" class="tx" style="left:1104.90px;top:621.71px;font-size:13.5px;color:rgba(255,255,255,.92);letter-spacing:1.012px;">www.anquanke.com</div>
</body></html>
